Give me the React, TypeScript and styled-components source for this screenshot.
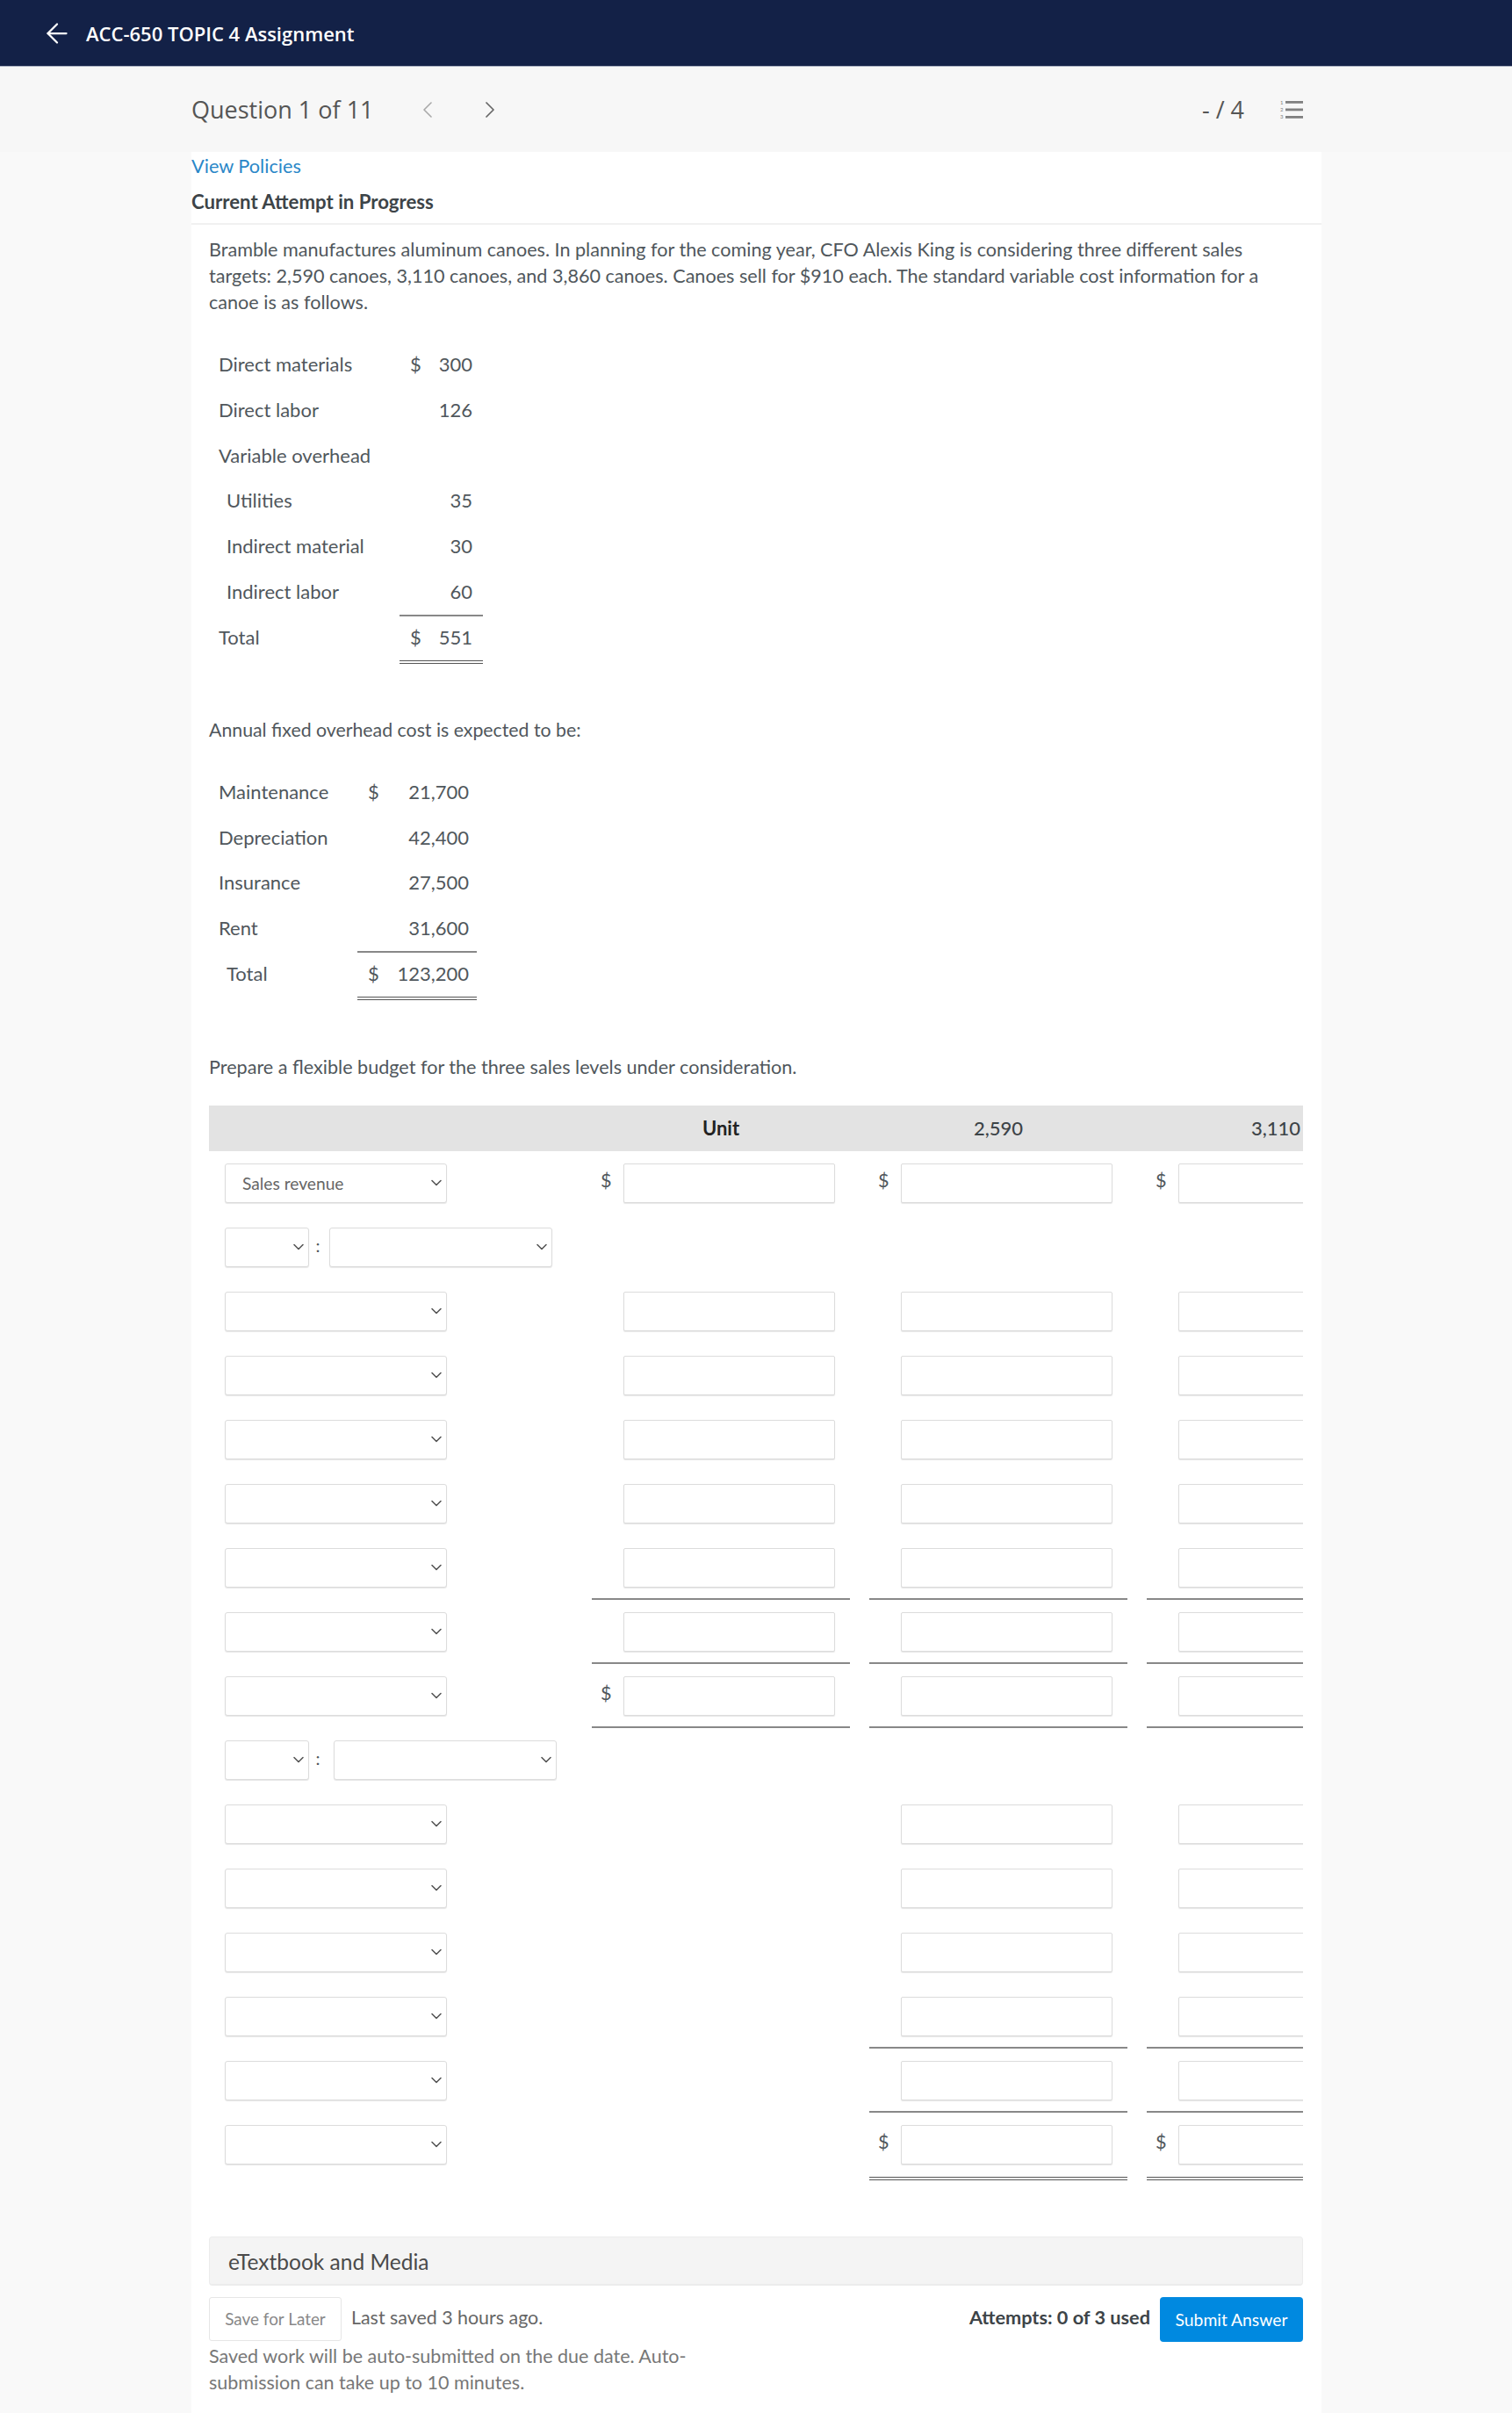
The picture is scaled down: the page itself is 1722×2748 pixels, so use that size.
import React from "react";
import styled, { createGlobalStyle } from "styled-components";
import { ArrowLeft, ChevronDown, ChevronLeft, ChevronRight } from "lucide-react";

const GlobalStyle = createGlobalStyle`
  html, body {
    margin: 0;
    padding: 0;
    background: #f9f9f9;
    font-family: "Lato", "Liberation Sans", sans-serif;
    color: #50575c;
  }
  * {
    box-sizing: border-box;
  }
`;

type Line = "" | "s" | "d";
type Slot = "" | "i" | "$";
type Row = {
  section?: boolean;
  offset?: number;
  label?: string;
  slots?: Array<Slot>;
  line?: Line;
};

const rows: Array<Row> = [
  { label: "Sales revenue", slots: ["$", "$", "$"] },
  { section: true, offset: 3 },
  { slots: ["i", "i", "i"] },
  { slots: ["i", "i", "i"] },
  { slots: ["i", "i", "i"] },
  { slots: ["i", "i", "i"] },
  { slots: ["i", "i", "i"], line: "s" },
  { slots: ["i", "i", "i"], line: "s" },
  { slots: ["$", "i", "i"], line: "s" },
  { section: true, offset: 8 },
  { slots: ["", "i", "i"] },
  { slots: ["", "i", "i"] },
  { slots: ["", "i", "i"] },
  { slots: ["", "i", "i"], line: "s" },
  { slots: ["", "i", "i"], line: "s" },
  { slots: ["", "$", "$"], line: "d" },
];

const variableCosts = [
  { label: "Direct materials", dollar: true, value: "300" },
  { label: "Direct labor", value: "126" },
  { label: "Variable overhead" },
  { label: "Utilities", indent: true, value: "35" },
  { label: "Indirect material", indent: true, value: "30" },
  { label: "Indirect labor", indent: true, value: "60", line: "s" as Line },
  { label: "Total", dollar: true, value: "551", line: "d" as Line },
];

const fixedCosts = [
  { label: "Maintenance", dollar: true, value: "21,700" },
  { label: "Depreciation", value: "42,400" },
  { label: "Insurance", value: "27,500" },
  { label: "Rent", value: "31,600", line: "s" as Line },
  { label: "Total", indent: true, dollar: true, value: "123,200", line: "d" as Line },
];

const lineStyle = (line?: Line) => {
  if (line === "s") return "border-bottom: 2px solid #888;";
  if (line === "d") return "border-bottom: 4px double #555;";
  return "";
};

const NumberedListIcon = () => (
  <svg width="28" height="24" viewBox="0 0 28 24">
    <g fill="#808080" fontFamily="Lato, sans-serif" fontSize="6">
      <text x="1" y="6">1</text>
      <text x="1" y="14">2</text>
      <text x="1" y="22">3</text>
      <rect x="7" y="2" width="20" height="2.8" />
      <rect x="7" y="10.5" width="20" height="2.8" />
      <rect x="7" y="19" width="20" height="2.8" />
    </g>
  </svg>
);

const Dropdown: React.FC<DropdownProps> = ({ width, offset, label }) => (
  <SelectBox $width={width} $offset={offset}>
    <Select defaultValue={label}>
      <option>{label}</option>
    </Select>
    <Caret>
      <ChevronDown size={20} color="#555555" strokeWidth={1.9} />
    </Caret>
  </SelectBox>
);

const CostTable: React.FC<CostTableProps> = ({ items, labelWidth, amountWidth, endPad }) => (
  <CostList>
    {items.map((item) => (
      <CostRow key={item.label} $labelWidth={labelWidth} $amountWidth={amountWidth}>
        <CostLabel $indent={item.indent}>{item.label}</CostLabel>
        {item.value && (
          <Amount $line={item.line} $endPad={endPad}>
            <span>{item.dollar ? "$" : ""}</span>
            <span>{item.value}</span>
          </Amount>
        )}
      </CostRow>
    ))}
  </CostList>
);

const App: React.FC = () => {
  return (
    <>
      <GlobalStyle />
      <Header>
        <ArrowLeft size={36} color="#ffffff" strokeWidth={1.5} />
        <HeaderTitle>ACC-650 TOPIC 4 Assignment</HeaderTitle>
      </Header>
      <QuestionBar>
        <QuestionTitle>Question 1 of 11</QuestionTitle>
        <NavButton $left={45}>
          <ChevronLeft size={32} color="#a8a8a8" strokeWidth={1.2} />
        </NavButton>
        <NavButton $left={39}>
          <ChevronRight size={32} color="#666666" strokeWidth={1.3} />
        </NavButton>
        <Score>- / 4</Score>
        <NumberedListIcon />
      </QuestionBar>
      <Content>
        <PolicyLink>View Policies</PolicyLink>
        <AttemptTitle>Current Attempt in Progress</AttemptTitle>
        <Question>
          <Paragraph>
            Bramble manufactures aluminum canoes. In planning for the coming year, CFO Alexis King
            is considering three different sales targets: 2,590 canoes, 3,110 canoes, and 3,860
            canoes. Canoes sell for $910 each. The standard variable cost information for a canoe is
            as follows.
          </Paragraph>
          <CostTable items={variableCosts} labelWidth={217} amountWidth={95} endPad={12} />
          <Note $top={64} $size={21.3}>Annual fixed overhead cost is expected to be:</Note>
          <CostTable items={fixedCosts} labelWidth={169} amountWidth={136} endPad={9} />
          <Note $top={65} $size={21.6}>
            Prepare a flexible budget for the three sales levels under consideration.
          </Note>
          <Budget>
            <HeadRow>
              <span />
              <UnitHead>Unit</UnitHead>
              <HeadCell>2,590</HeadCell>
              <HeadCell>3,110</HeadCell>
            </HeadRow>
            {rows.map((row, i) => (
              <BudgetRow key={i}>
                <LabelCell>
                  {row.section ? (
                    <>
                      <Dropdown width={96} />
                      <Colon>:</Colon>
                      <Dropdown width={254} offset={row.offset} />
                    </>
                  ) : (
                    <Dropdown width={253} label={row.label} />
                  )}
                </LabelCell>
                {row.slots &&
                  row.slots.map((slot, j) => (
                    <ValueCell key={j} $line={slot ? row.line : ""}>
                      {slot === "$" && <Dollar>$</Dollar>}
                      {slot && <Input />}
                    </ValueCell>
                  ))}
              </BudgetRow>
            ))}
          </Budget>
          <Media>eTextbook and Media</Media>
          <Footer>
            <SaveColumn>
              <SaveRow>
                <SaveButton>Save for Later</SaveButton>
                <SavedText>Last saved 3 hours ago.</SavedText>
              </SaveRow>
              <AutoNote>
                Saved work will be auto-submitted on the due date. Auto-submission can take up to 10
                minutes.
              </AutoNote>
            </SaveColumn>
            <Attempts>Attempts: 0 of 3 used</Attempts>
            <SubmitButton>Submit Answer</SubmitButton>
          </Footer>
        </Question>
      </Content>
    </>
  );
};

const Header = styled.header`
  height: 76px;
  background: #132147;
  border-bottom: 1px solid #aab1c2;
  display: flex;
  align-items: center;
  padding-left: 47px;
  gap: 15px;
`;
const HeaderTitle = styled.div`
  color: #fff;
  font-family: "Open Sans", sans-serif;
  font-weight: 600;
  font-size: 22px;
`;
const QuestionBar = styled.div`
  height: 97px;
  background: #f7f7f7;
  display: flex;
  align-items: center;
  padding: 0 237px 0 218px;
`;
const QuestionTitle = styled.div`
  font-family: "Open Sans", sans-serif;
  font-size: 27px;
  color: #555;
`;
const NavButton = styled.div<{ $left: number }>`
  display: flex;
  margin-left: ${(p) => p.$left}px;
`;
const Score = styled.div`
  margin-left: auto;
  margin-right: 40px;
  font-family: "Open Sans", sans-serif;
  font-size: 27px;
  color: #555;
`;
const Content = styled.main`
  margin-left: 218px;
  width: 1287px;
  background: #fff;
  height: 2575px;
`;
const PolicyLink = styled.a`
  display: block;
  padding-top: 3px;
  font-size: 21.7px;
  line-height: 26px;
  color: #2a87c8;
`;
const AttemptTitle = styled.div`
  margin-top: 15px;
  padding-bottom: 11px;
  height: 39px;
  font-size: 22.2px;
  font-weight: 700;
  line-height: 26px;
  color: #3d4448;
  border-bottom: 2px solid #f1f1f1;
`;
const Question = styled.div`
  padding: 13px 21px 0 20px;
`;
const Paragraph = styled.p`
  margin: 0 0 30px;
  width: 1200px;
  font-size: 21.6px;
  line-height: 30px;
`;
const CostList = styled.div`
  display: flex;
  flex-direction: column;
`;
const CostRow = styled.div<{ $labelWidth: number; $amountWidth: number }>`
  display: grid;
  grid-template-columns: ${(p) => p.$labelWidth}px ${(p) => p.$amountWidth}px;
  height: 51.83px;
  font-size: 22px;
`;
const CostLabel = styled.div<{ $indent?: boolean }>`
  padding-left: ${(p) => (p.$indent ? 20 : 11)}px;
  line-height: 51.83px;
  white-space: nowrap;
`;
const Amount = styled.div<{ $line?: Line; $endPad: number }>`
  display: flex;
  justify-content: space-between;
  padding: 0 ${(p) => p.$endPad}px 0 12px;
  line-height: 51.83px;
  ${(p) => lineStyle(p.$line)}
`;
const Note = styled.p<{ $top: number; $size: number }>`
  margin: ${(p) => p.$top}px 0 30px;
  font-size: ${(p) => p.$size}px;
  line-height: 30px;
`;
const Budget = styled.div`
  width: 1246px;
  overflow: hidden;
  margin-top: -1px;
`;
const HeadRow = styled.div`
  display: grid;
  grid-template-columns: 414px repeat(3, 294px);
  column-gap: 22px;
  height: 52px;
  align-items: center;
  background: #e3e3e3;
  font-size: 22px;
  text-align: center;
`;
const HeadCell = styled.div`
  font-weight: 500;
  color: #3d4448;
`;
const UnitHead = styled(HeadCell)`
  font-weight: 700;
  color: #222;
`;
const BudgetRow = styled.div`
  display: grid;
  grid-template-columns: 414px repeat(3, 294px);
  column-gap: 22px;
  min-height: 73px;
`;
const LabelCell = styled.div`
  display: flex;
  align-items: flex-start;
  padding: 14px 0 0 18px;
`;
const SelectBox = styled.div<{ $width: number; $offset?: number }>`
  position: relative;
  flex: none;
  width: ${(p) => p.$width}px;
  height: 45px;
  margin-left: ${(p) => p.$offset || 0}px;
`;
const Select = styled.select`
  display: block;
  width: 100%;
  height: 100%;
  padding-left: 19px;
  appearance: none;
  background: #fff;
  border: 1px solid #dcdcdc;
  border-radius: 3px;
  box-shadow: 0 1px 1px #e6e6e6;
  font-family: "Lato", sans-serif;
  font-size: 19.2px;
  color: #666;
`;
const Caret = styled.span`
  position: absolute;
  right: 2px;
  top: 12px;
  display: flex;
`;
const Colon = styled.span`
  flex: none;
  width: 20px;
  text-align: center;
  font-size: 20px;
  line-height: 40px;
`;
const ValueCell = styled.div<{ $line?: Line }>`
  position: relative;
  height: ${(p) => (p.$line === "d" ? 77 : 73)}px;
  padding: 14px 0 0 36px;
  ${(p) => lineStyle(p.$line)}
`;
const Dollar = styled.span`
  position: absolute;
  left: 10px;
  top: 20px;
  font-size: 21.6px;
  line-height: 26px;
  color: #50575c;
`;
const Input = styled.input`
  display: block;
  width: 241px;
  height: 45px;
  background: #fff;
  border: 1px solid #dcdcdc;
  border-radius: 2px;
  box-shadow: 0 1px 1px #e6e6e6;
`;
const Media = styled.div`
  margin-top: 64px;
  width: 1246px;
  height: 56px;
  padding-left: 21px;
  background: #f4f4f4;
  border: 1px solid #ececec;
  border-bottom-width: 2px;
  border-radius: 4px;
  font-size: 24.5px;
  line-height: 55px;
  color: #4a4a4a;
`;
const Footer = styled.div`
  display: flex;
  align-items: flex-start;
  width: 1246px;
  margin-top: 13px;
`;
const SaveColumn = styled.div`
  width: 570px;
  margin-right: auto;
`;
const SaveRow = styled.div`
  display: flex;
  gap: 11px;
`;
const SaveButton = styled.button`
  width: 151px;
  height: 50px;
  background: #fff;
  border: 1px solid #e6e6e6;
  border-radius: 3px;
  font-family: "Lato", sans-serif;
  font-size: 18.9px;
  color: #888;
`;
const SavedText = styled.div`
  font-size: 21.4px;
  line-height: 46px;
  color: #666;
`;
const AutoNote = styled.p`
  margin: 2px 0 0;
  font-size: 21.5px;
  line-height: 30px;
  color: #777;
`;
const Attempts = styled.div`
  margin-right: 11px;
  font-size: 21.7px;
  font-weight: 700;
  line-height: 46px;
  color: #3d4448;
`;
const SubmitButton = styled.button`
  width: 163px;
  height: 51px;
  background: #0089e0;
  border: none;
  border-radius: 4px;
  font-family: "Lato", sans-serif;
  font-size: 19.3px;
  color: #fff;
`;

export default App;

type CostItem = {
  label: string;
  indent?: boolean;
  dollar?: boolean;
  value?: string;
  line?: Line;
};
type CostTableProps = {
  items: Array<CostItem>;
  labelWidth: number;
  amountWidth: number;
  endPad: number;
};
type DropdownProps = {
  width: number;
  offset?: number;
  label?: string;
};
